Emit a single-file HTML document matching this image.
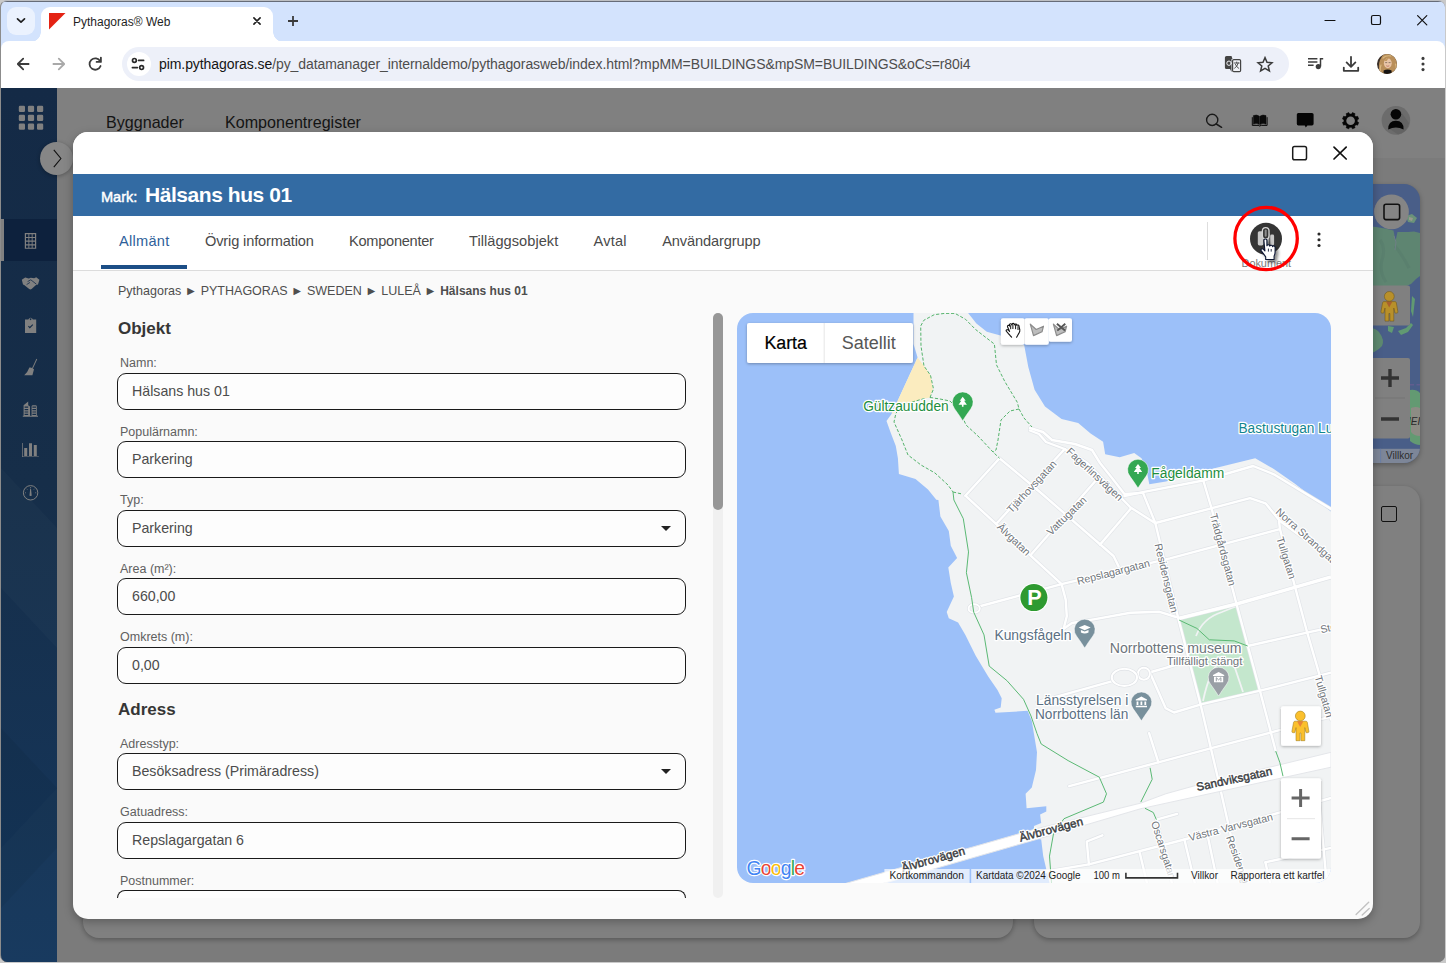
<!DOCTYPE html>
<html lang="sv">
<head>
<meta charset="utf-8">
<title>Pythagoras® Web</title>
<style>
*{box-sizing:border-box;margin:0;padding:0}
html,body{width:1446px;height:963px;overflow:hidden;background:#c9c9c9;font-family:"Liberation Sans",sans-serif;}
.abs{position:absolute}
#win{position:absolute;left:0;top:0;width:1445px;height:962px;border-radius:7px;overflow:hidden;background:#7b7b7b;border-top:1px solid #bdbfc2;border-left:1px solid #8c8c8c;}
/* ---------- browser chrome ---------- */
#tabstrip{position:absolute;left:0;top:0;width:1446px;height:52px;background:#d3e3fd}
#tabdd{position:absolute;left:6px;top:6px;width:28px;height:28px;border-radius:9px;background:#ebf2fe}
#tab{position:absolute;left:40px;top:6px;width:232px;height:36px;background:#fff;border-radius:9px 9px 0 0}
#tab:before,#tab:after{content:"";position:absolute;bottom:1px;width:10px;height:10px;background:radial-gradient(circle at 0 0,rgba(255,255,255,0) 9.5px,#fff 10px)}
#tab:before{left:-10px}
#tab:after{right:-10px;background:radial-gradient(circle at 100% 0,rgba(255,255,255,0) 9.5px,#fff 10px)}
#tabtitle{position:absolute;left:32px;top:8px;font-size:12px;color:#1f1f1f;white-space:nowrap}
#toolbar{position:absolute;left:0;top:40px;width:1444px;height:47px;background:#fff;border-radius:8px 8px 0 0}
#omni{position:absolute;left:120.5px;top:6px;width:1167.5px;height:34px;border-radius:17px;background:#edf0f9}
#omni .site{position:absolute;left:5px;top:5px;width:24px;height:24px;border-radius:12px;background:#fff}
#url{position:absolute;left:37.5px;top:9px;font-size:14px;color:#4d4d4d;white-space:nowrap;letter-spacing:-0.075px}
/* ---------- app ---------- */
#app{position:absolute;left:0;top:87px;width:1446px;height:876px;background:#7b7b7b}
#side{position:absolute;left:0;top:0;width:56px;height:876px;background:linear-gradient(180deg,#142a46 0%,#162e49 45%,#15375d 100%)}
#side .active{position:absolute;left:0;top:131px;width:56px;height:42px;background:#0d213d}
#side .active:before{content:"";position:absolute;left:0;top:0;width:3px;height:42px;background:#808080}
#topnav{position:absolute;left:56px;top:0;width:1390px;height:70px;background:#808080}
#topnav span{position:absolute;top:25px;font-size:16.1px;color:#141414;white-space:nowrap}
.card{position:absolute;background:#808080;border-radius:16px;box-shadow:0 2px 5px rgba(0,0,0,.28)}
#collapse{position:absolute;left:39px;top:53.5px;width:33px;height:33px;border-radius:17px;background:#868686;box-shadow:0 1px 4px rgba(0,0,0,.3)}
/* ---------- modal ---------- */
#modal{position:absolute;left:72px;top:131px;width:1300px;height:787px;border-radius:15px;background:#fafafa;overflow:hidden;box-shadow:0 3px 10px rgba(0,0,0,.28)}
#mtop{position:absolute;left:0;top:0;width:1300px;height:43px;background:#fff}
#mhead{position:absolute;left:0;top:43px;width:1300px;height:42px;background:#336ba3}
#mhead .lbl{position:absolute;left:28px;top:15px;font-size:14.6px;color:#fff;font-weight:normal;-webkit-text-stroke:.45px #fff;letter-spacing:-.05px}
#mhead .ttl{position:absolute;left:72px;top:9px;font-size:21px;color:#fff;font-weight:bold;letter-spacing:-.45px;white-space:nowrap}
#mtabs{position:absolute;left:0;top:85px;width:1300px;height:55px;background:#fff;border-bottom:1px solid #dcdcdc}
#mtabs span{position:absolute;top:17px;font-size:14.6px;color:#4a4a4a;white-space:nowrap}
#mtabs .ul{position:absolute;left:28px;top:49px;width:86px;height:4px;background:#1c4e86}
.crumb{position:absolute;left:45px;top:153px;font-size:12.53px;color:#4e4e4e;white-space:nowrap}
.h{position:absolute;left:45px;font-size:17px;font-weight:bold;color:#363636}
.l{position:absolute;left:47px;font-size:12.5px;color:#606060;white-space:nowrap}
.f{position:absolute;left:44px;width:568.6px;height:37px;border:1px solid #1a1a1a;border-radius:9px;background:#fdfdfd;font-size:14.2px;color:#4c4c4c;padding:9.4px 0 0 14px;white-space:nowrap}
.f.sel:after{content:"";position:absolute;right:14px;top:15px;border-left:5px solid transparent;border-right:5px solid transparent;border-top:5px solid #222}
#sb{position:absolute;left:640px;top:182px;width:10px;height:585px;border-radius:5px;background:#f0f0f0}
#sb i{position:absolute;left:0;top:0;width:10px;height:197px;border-radius:5px;background:#979797}
#map{position:absolute;left:664px;top:182px;width:594px;height:570px;border-radius:16px;overflow:hidden;background:transparent}
</style>
</head>
<body>
<div id="win">
 <div class="abs" style="left:3px;top:0;width:1438px;height:1px;background:#666c78;z-index:50"></div>
 <div id="tabstrip">
  <div id="tabdd"></div>
  <div id="tab"><div id="tabtitle">Pythagoras® Web</div></div>
 </div>
 <div id="toolbar">
  <div id="omni"><div class="site"></div><div id="url"><span style="color:#141414">pim.pythagoras.se</span>/py_datamanager_internaldemo/pythagorasweb/index.html?mpMM=BUILDINGS&amp;mpSM=BUILDINGS&amp;oCs=r80i4</div></div>
 </div>

 <svg id="chromeicons" class="abs" style="left:-1px;top:-1px" width="1446" height="88" viewBox="0 0 1446 88" fill="none" stroke-linecap="round" stroke-linejoin="round">
  <!-- tab dropdown chevron -->
  <path d="M17.5 18.9 L21 22.2 L24.5 18.9" stroke="#1f1f1f" stroke-width="1.7"/>
  <!-- favicon -->
  <path d="M49 13 H65.5 L49 29.5 Z" fill="#e42313"/>
  <!-- tab close -->
  <path d="M253.9 17.9 L260.1 24.1 M260.1 17.9 L253.9 24.1" stroke="#1f1f1f" stroke-width="1.6"/>
  <!-- new tab -->
  <path d="M288 21 H298 M293 16 V26" stroke="#3a3a3a" stroke-width="1.8" stroke-linecap="butt"/>
  <!-- window controls -->
  <path d="M1325 20.5 H1335" stroke="#111" stroke-width="1.2"/>
  <rect x="1371.5" y="15.5" width="9" height="9" rx="1.6" stroke="#111" stroke-width="1.2"/>
  <path d="M1417.6 15.6 L1426.8 24.8 M1426.8 15.6 L1417.6 24.8" stroke="#111" stroke-width="1.2"/>
  <!-- back -->
  <path d="M28.6 64 H18 M23.2 58.6 L17.8 64 L23.2 69.4" stroke="#3c3c3c" stroke-width="1.8"/>
  <!-- forward -->
  <path d="M53.4 64 H64 M58.8 58.6 L64.2 64 L58.8 69.4" stroke="#a9a9a9" stroke-width="1.8"/>
  <!-- reload -->
  <path d="M100.2 61.2 A5.7 5.7 0 1 0 100.6 66" stroke="#3c3c3c" stroke-width="1.8"/>
  <path d="M100.9 57.6 V61.9 H96.6" stroke="#3c3c3c" stroke-width="1.8"/>
  <!-- site settings (tune) icon -->
  <g stroke="#2a2a2a" stroke-width="1.7">
   <circle cx="134.4" cy="60.4" r="1.9"/><path d="M138.6 60.4 H143.6"/>
   <circle cx="141.6" cy="67.6" r="1.9"/><path d="M132.4 67.6 H137.4"/>
  </g>
  <!-- translate icon -->
  <path d="M1226.5 56 h5 l1 3 h-1 v13 l-1.5 -3 h-3.5 a1.6 1.6 0 0 1 -1.6 -1.6 v-9.8 a1.6 1.6 0 0 1 1.6 -1.6z" fill="#444" stroke="none"/>
  <rect x="1232.6" y="59.6" width="8" height="12" rx="1.2" fill="#f2f3f8" stroke="#444" stroke-width="1.2"/>
  <circle cx="1229" cy="63.2" r="2.2" stroke="#f2f3f8" stroke-width="1"/>
  <path d="M1234.2 63 h5 M1236.7 62 v1 M1238.3 63 q-.8 3.2 -3.8 5.4 M1235.4 64.4 q1 2.6 3.4 4" stroke="#444" stroke-width=".9"/>
  <!-- star -->
  <path d="M1265 57.6 L1267 62.2 L1272 62.7 L1268.2 66 L1269.4 70.9 L1265 68.3 L1260.6 70.9 L1261.8 66 L1258 62.7 L1263 62.2 Z" stroke="#3c3c3c" stroke-width="1.5" stroke-linejoin="miter"/>
  <!-- media (queue music) -->
  <path d="M1308 58.7 H1317.4 M1308 62 H1317.4 M1308 65.3 H1313.6" stroke="#3c3c3c" stroke-width="1.5" stroke-linecap="butt"/>
  <path d="M1320.5 66.5 V58.7 H1323.2" stroke="#3c3c3c" stroke-width="1.5" stroke-linecap="butt" stroke-linejoin="miter"/>
  <circle cx="1318.3" cy="66.6" r="2.6" fill="#3c3c3c"/>
  <!-- download -->
  <path d="M1351 56.8 V66.4 M1346.6 62.4 L1351 66.8 L1355.4 62.4" stroke="#3c3c3c" stroke-width="1.8"/>
  <path d="M1343.8 67.6 V70.8 H1358.2 V67.6" stroke="#3c3c3c" stroke-width="1.8"/>
  <!-- avatar -->
  <defs><clipPath id="avc"><circle cx="1387" cy="64" r="10"/></clipPath></defs>
  <g clip-path="url(#avc)">
   <rect x="1376" y="53" width="22" height="22" fill="#3a2f28"/>
   <path d="M1380.5 75 q-3 -8 -.5 -15 q2.5 -7 8 -7 q6 0 8.500000000000001 6 q2 6 0 16z" fill="#b98f5a"/>
   <path d="M1381 74 q-1.500000000000001 -5 0 -9 M1395.5 73 q1.500000000000001 -5 0 -9 M1383 58 q3 -3 8 -2" stroke="#d9b880" stroke-width="1.2" fill="none"/>
   <ellipse cx="1387.8" cy="63.2" rx="3.9" ry="5" fill="#e8c4a6"/>
   <path d="M1384.2 61 q1.500000000000001 -3.500000000000001 5.500000000000001 -3.500000000000001 q-2 1 -3 3.500000000000001z" fill="#c39a62"/>
   <path d="M1385.6 62.6 h1.2 M1389 62.6 h1.2" stroke="#6b5a4a" stroke-width=".7"/>
   <path d="M1386.6 66 q1.2 .8 2.4 0" stroke="#b0604f" stroke-width=".7" fill="none"/>
   <path d="M1383.6 70.5 q4 -2 8 0 v5 h-8z" fill="#161413"/>
  </g>
  <!-- kebab -->
  <g fill="#3c3c3c"><circle cx="1423" cy="58.4" r="1.55"/><circle cx="1423" cy="64" r="1.55"/><circle cx="1423" cy="69.6" r="1.55"/></g>
 </svg>
 <div id="app">
  <div id="topnav"><span style="left:49px">Byggnader</span><span style="left:168px">Komponentregister</span></div>
  <div class="card" style="left:82px;top:90px;width:930px;height:760px"></div>
  <div class="card" id="rcard1" style="left:1033px;top:96px;width:386px;height:279px;overflow:hidden;background:#495e88">
   <svg class="abs" style="left:-1034px;top:-184px" width="1446" height="500" viewBox="0 0 1446 500">
    <!-- land -->
    <path d="M1366 226 L1376 227 L1385 228.5 L1393.5 230.5 L1395.5 241 L1397.5 232 L1408 232 L1414 231.5 L1420 233 V276 L1416 279 L1411 284 L1404 287 H1366 Z" fill="#5e8571"/>
    <path d="M1380 240 q6 8 2 20 q-3 12 4 22 M1395 246 q8 10 14 22" fill="none" stroke="#56796a" stroke-width="3" opacity=".45"/>
    <path d="M1394 236 l2 6 l-1 8" stroke="#6e7f86" stroke-width="1" fill="none"/>
    <path d="M1406 216 l6 -2 l5 4 l-3 5 l-6 -1z" fill="#6b9379"/>
    <path d="M1409 217 l4 1 l-1 3 l-3 -1z" fill="#9a9a8e"/>
    <path d="M1366 328 q8 -1 13 4 q6 8 3 14 q-6 7 -16 8z" fill="#5e8a70"/>
    <path d="M1388 326 l6 1 l-2 6 l-4 -2z M1398 331 l8 -3 l5 -5 l2 2 l-5 7 l-7 3z M1412 296 l3 3 l-2 18 l-2 -6z" fill="#619a72"/>
    <path d="M1410 390 q6 -1 10 3 v52 q-5 0 -10 -4z" fill="#639a72"/>
    <path d="M1411 408 q5 -2 9 0 v28 q-6 0 -9 -4z" fill="#8d8c84"/>
    <path d="M1410 384.800000000000001 H1420" stroke="#6e5d93" stroke-width="1" stroke-dasharray="4 2.500000000000001"/>
    <text x="1408" y="425" font-size="10" font-style="italic" fill="#2a2a2a" font-family="Liberation Sans, sans-serif">IEI</text>
    <!-- circle w/ square -->
    <circle cx="1391.5" cy="211.8" r="17.4" fill="#858585"/>
    <rect x="1384" y="204.2" width="15.6" height="15.4" rx="2" fill="none" stroke="#111" stroke-width="1.6"/>
    <!-- pegman -->
    <rect x="1360" y="285.6" width="50" height="40" rx="2" fill="#808080"/>
    <g transform="translate(89 -419.6)"><path d="M1295 721.2 L1305.9 721.2 q1 0 1.400000000000001 1 L1308.9 731.4 q.2 1 -.8 1.200000000000001 l-1.400000000000001 .2 q-.6 0 -.8 -.6 L1304.8 727.6 V740.7 h-3.9 v-7.600000000000001 h-1 v7.600000000000001 h-3.9 V727.6 L1294.9 732.2 q-.2 .6 -.8 .6 l-1.400000000000001 -.2 q-1 -.2 -.8 -1.200000000000001 L1293.6 722.2 q.4 -1 1.400000000000001 -1z" fill="#b8902a" stroke="#6e561a" stroke-width=".55" stroke-linejoin="round"/><path d="M1297 721.2 h6.4 l-3.2 5.800000000000001z" fill="#a9602d"/><circle cx="1300.3" cy="716" r="4.9" fill="#b8902a" stroke="#6e561a" stroke-width=".55"/></g>
    <!-- zoom -->
    <rect x="1360" y="358" width="50" height="80.4" rx="2" fill="#808080"/>
    <path d="M1375 398 H1405" stroke="#757575" stroke-width="1"/>
    <path d="M1381 378 h18 M1390 369 v18 M1381 419 h18" stroke="#333" stroke-width="3.4"/>
    <!-- footer -->
    <rect x="1360" y="448.800000000000001" width="70" height="14.5" fill="#7d8698"/>
    <path d="M1380.600000000000001 448.800000000000001 v14" stroke="#6c7fa6" stroke-width="1"/>
    <text x="1386" y="459.2" font-size="10" fill="#2c2c2c" font-family="Liberation Sans, sans-serif">Villkor</text>
   </svg>
  </div>
  <div class="card" style="left:1033px;top:398px;width:386px;height:452px"><div class="abs" style="left:346.5px;top:19.5px;width:16.5px;height:16.5px;border:1.6px solid #111;border-radius:2px"></div></div>
  <div id="side"><svg class="abs" style="left:0;top:0" width="56" height="876" viewBox="0 0 56 876"><path d="M0 380 L56 440 L56 560 L0 500Z" fill="#fff" opacity=".018"/><path d="M0 640 L56 700 L56 760 L0 820Z" fill="#000" opacity=".05"/><path d="M0 760 L56 700 L56 876 L0 876Z" fill="#fff" opacity=".015"/></svg><div class="active"></div><svg class="abs" style="left:-1px;top:-88px" width="58" height="963" viewBox="0 0 58 963">
   <g fill="#808080">
    <g id="gridic">
     <rect x="18.8" y="105.8" width="6.2" height="6.2" rx="1.2"/><rect x="27.9" y="105.8" width="6.2" height="6.2" rx="1.2"/><rect x="37" y="105.8" width="6.2" height="6.2" rx="1.2"/>
     <rect x="18.8" y="114.7" width="6.2" height="6.2" rx="1.2"/><rect x="27.9" y="114.7" width="6.2" height="6.2" rx="1.2"/><rect x="37" y="114.7" width="6.2" height="6.2" rx="1.2"/>
     <rect x="18.8" y="123.6" width="6.2" height="6.2" rx="1.2"/><rect x="27.9" y="123.6" width="6.2" height="6.2" rx="1.2"/><rect x="37" y="123.6" width="6.2" height="6.2" rx="1.2"/>
    </g>
    <!-- building grid icon -->
    <path fill-rule="evenodd" d="M24.8 233 h11.4 v15.8 h-11.4z M26 234.3 v2.6 h2.4 v-2.6z M29.3 234.3 v2.6 h2.4 v-2.6z M32.6 234.3 v2.6 h2.4 v-2.6z M26 238 v2.6 h2.4 v-2.6z M29.3 238 v2.6 h2.4 v-2.6z M32.6 238 v2.6 h2.4 v-2.6z M26 241.7 v2.6 h2.4 v-2.6z M29.3 241.7 v2.6 h2.4 v-2.6z M32.6 241.7 v2.6 h2.4 v-2.6z M26 245.4 v2.4 h2.4 v-2.4z M29.3 245.4 v2.4 h2.4 v-2.4z M32.6 245.4 v2.4 h2.4 v-2.4z"/>
    <!-- handshake -->
    <path d="M21.8 279.8 l3.4 -2.2 l3.6 1 l2 -.9 l3.4 .6 l2 -1 l3.2 2.4 l-1.4 4.8 l-2 .6 l-4.4 4 q-1.2 .8 -2.4 0 l-5 -4.2 l-1.2 -.4z"/>
    <path d="M27.6 281.6 l3.2 -1.8 l5.6 4.4 M26.6 284.6 l3.4 -2.2" fill="none" stroke="#152c4a" stroke-width=".8"/>
    <!-- clipboard -->
    <path fill-rule="evenodd" d="M25 319.4 h3.4 a2.3 2.3 0 0 1 4.4 0 h3.4 v13.6 h-11.2z M30.6 318.2 a.9 .9 0 1 0 .01 0z M28 326.6 l1.8 1.8 l3.4 -3.4 l-.8 -.8 l-2.6 2.6 l-1 -1z"/>
    <!-- broom -->
    <path d="M36.4 358.8 l.8 .4 l-4.4 9.6 l-.9 -.4z"/>
    <path d="M29.4 367.6 q2.4 -.4 4.6 1.6 l-1.6 6 h-8.2 q3.4 -2.6 5.2 -7.6z"/>
    <!-- city buildings -->
    <path fill-rule="evenodd" d="M22.8 416.8 v-1 h.8 v-10.6 l4.6 -3.6 v3.6 l1.8 1.2 v9.4 h1.6 v-9.2 q0 -1.4 1.4 -1.4 h2.4 q1.4 0 1.4 1.4 v9.200000000000001 h1.2 v1z M24.6 406.6 v1.2 h3.6 v-1.2z M24.6 409 v1.2 h3.6 v-1.2z M24.6 411.4 v1.2 h3.6 v-1.2z M24.6 413.8 v1.2 h3.6 v-1.2z M32.4 406.6 v1.2 h3.6 v-1.2z M32.4 409 v1.2 h3.6 v-1.2z M32.4 411.4 v1.2 h3.6 v-1.2z M32.4 413.8 v1.2 h3.6 v-1.2z"/>
    <!-- bar chart -->
    <path d="M22 443 h.7 v13.4 h16.2 v.7 h-16.9z M24.2 448 h3 v8 h-3z M29 443.2 h3 v12.8 h-3z M33.8 445 h3 v11 h-3z"/>
   </g>
   <!-- gauge -->
   <g fill="none" stroke="#808080">
    <circle cx="30.6" cy="492.8" r="7.2" stroke-width="1"/>
    <path d="M30.6 487 v1.2 M25 492.8 h1 M35.2 492.8 h1 M26.6 488.8 l.7 .7 M34.6 488.8 l-.7 .7" stroke-width=".8"/>
   </g>
   <path d="M30.2 488.8 h.8 l.6 5.6 a1.1 1.1 0 1 1 -2 0z" fill="#808080"/>
  </svg></div>

  <svg class="abs" style="left:-1px;top:-88px;pointer-events:none" width="1446" height="200" viewBox="0 0 1446 200">
   <circle cx="1212.2" cy="119.9" r="5.6" fill="none" stroke="#1a1a1a" stroke-width="1.4"/>
   <path d="M1216.3 124 L1221.6 127.3" stroke="#1a1a1a" stroke-width="1.5" stroke-linecap="round"/>
   <!-- book -->
   <path d="M1253.4 115.6 q3.200000000000001 -1.400000000000001 6.000000000000001 .6 v8.4 q-2.800000000000001 -1.800000000000001 -6.000000000000001 -.4z M1266 115.6 q-3.200000000000001 -1.400000000000001 -6.000000000000001 .6 v8.4 q2.800000000000001 -1.800000000000001 6.000000000000001 -.4z" fill="#0a0a0a" stroke="#0a0a0a" stroke-width=".5"/>
   <path d="M1252.3 117.2 v8.2 h5.8 q1.600000000000001 0 1.600000000000001 .9 q0 -.9 1.600000000000001 -.9 h5.8 v-8.2" fill="none" stroke="#0a0a0a" stroke-width="1"/>
   <!-- chat -->
   <path d="M1298.4 113 h13.6 q1.6 0 1.6 1.6 v9.2 q0 1.6 -1.6 1.6 h-4.6 l-1.6 2 l-1 -2 h-6.4 q-1.6 0 -1.6 -1.6 v-9.2 q0 -1.6 1.6 -1.6z" fill="#050505"/>
   <!-- gear -->
   <path d="M1358.70 122.51 L1357.61 125.15 L1356.02 124.64 L1354.54 126.12 L1355.05 127.71 L1352.41 128.80 L1351.65 127.32 L1349.55 127.32 L1348.79 128.80 L1346.15 127.71 L1346.66 126.12 L1345.18 124.64 L1343.59 125.15 L1342.50 122.51 L1343.98 121.75 L1343.98 119.65 L1342.50 118.89 L1343.59 116.25 L1345.18 116.76 L1346.66 115.28 L1346.15 113.69 L1348.79 112.60 L1349.55 114.08 L1351.65 114.08 L1352.41 112.60 L1355.05 113.69 L1354.54 115.28 L1356.02 116.76 L1357.61 116.25 L1358.70 118.89 L1357.22 119.65 L1357.22 121.75Z" fill="#050505" stroke="#050505" stroke-width=".6" stroke-linejoin="round"/>
   <circle cx="1350.6" cy="120.7" r="4.3" fill="#808080"/>
   <!-- user -->
   <circle cx="1395.9" cy="120.4" r="14.3" fill="#6c6c6c"/>
   <path d="M1400 110.5 L1409 123 A14.3 14.3 0 0 1 1398 134.4 L1389 128.5z" fill="#636363"/>
   <circle cx="1395.9" cy="114.2" r="5.3" fill="#050505"/>
   <path d="M1388.2 129.6 q-.2 -8.800000000000001 7.7 -8.800000000000001 q7.9 0 7.7 8.800000000000001 q-7.7 -4.4 -15.4 0z" fill="#050505"/>
  </svg>
  <div id="collapse"><svg width="33" height="33" viewBox="0 0 33 33" class="abs" style="left:0;top:0"><path d="M13.8 7.8 L20.9 16.5 L13.8 25.2" fill="none" stroke="#111" stroke-width="1.1"/></svg></div>
 </div>
 <div id="modal"><div id="mi" class="abs" style="left:0;top:-1px;width:1300px;height:788px">
  <div id="mtop"></div>
  <div id="mhead"><span class="lbl">Mark:</span><span class="ttl">Hälsans hus 01</span></div>
  <div id="mtabs">
   <span style="left:46px;color:#2f5f9a;letter-spacing:.27px">Allmänt</span>
   <span style="left:132px;letter-spacing:-.14px">Övrig information</span>
   <span style="left:276px;letter-spacing:-.27px">Komponenter</span>
   <span style="left:396px;letter-spacing:.04px">Tilläggsobjekt</span>
   <span style="left:520.6px;letter-spacing:.2px">Avtal</span>
   <span style="left:589.2px;letter-spacing:-.12px">Användargrupp</span>
   <div class="ul"></div>
  </div>
  <div class="crumb">Pythagoras ► PYTHAGORAS ► SWEDEN ► LULEÅ ► <b style="font-size:12px">Hälsans hus 01</b></div>
  <div class="h" style="top:188px">Objekt</div>
  <div class="l" style="top:225px">Namn:</div>
  <div class="f" style="top:242px">Hälsans hus 01</div>
  <div class="l" style="top:294px">Populärnamn:</div>
  <div class="f" style="top:310px">Parkering</div>
  <div class="l" style="top:362px">Typ:</div>
  <div class="f sel" style="top:379px">Parkering</div>
  <div class="l" style="top:431px">Area (m²):</div>
  <div class="f" style="top:447px">660,00</div>
  <div class="l" style="top:499px">Omkrets (m):</div>
  <div class="f" style="top:516px">0,00</div>
  <div class="h" style="top:569px">Adress</div>
  <div class="l" style="top:606px">Adresstyp:</div>
  <div class="f sel" style="top:622px">Besöksadress (Primäradress)</div>
  <div class="l" style="top:674px">Gatuadress:</div>
  <div class="f" style="top:691px">Repslagargatan 6</div>
  <div class="l" style="top:743px">Postnummer:</div>
  <div class="f" style="top:759px;height:7.5px;border-bottom:none;border-radius:9px 9px 0 0;padding:0"></div>

  <svg class="abs" style="left:-73px;top:-131px;pointer-events:none" width="1446" height="930" viewBox="0 0 1446 930">
   <rect x="1292.7" y="146.4" width="13.8" height="13.4" rx="1.8" fill="none" stroke="#1a1a1a" stroke-width="1.5"/>
   <path d="M1334 147.2 L1346.2 159 M1346.2 147.2 L1334 159" stroke="#111" stroke-width="1.7" stroke-linecap="round"/>
   <path d="M1207.5 222 V260" stroke="#dedede" stroke-width="1"/>
   <g fill="#2a2a2a"><circle cx="1319" cy="234" r="1.55"/><circle cx="1319" cy="239.7" r="1.55"/><circle cx="1319" cy="245.5" r="1.55"/></g>
   <!-- Dokument button -->
   <circle cx="1266" cy="238.8" r="16" fill="#353535"/>
   <rect x="1257.8" y="231.2" width="5.6" height="14.2" rx="1.6" fill="#c9c9c9"/>
   <rect x="1264.2" y="233" width="5.2" height="12.4" rx="1" fill="#a9a9a9"/>
   <rect x="1270.2" y="234.6" width="3.9" height="10.8" rx="1.4" fill="#c9c9c9"/>
   <rect x="1262.4" y="227.6" width="6.6" height="11.4" rx="3.2" fill="#353535" stroke="#d4d4d4" stroke-width="1.3"/>
   <rect x="1264.7" y="229.6" width="2" height="7.2" rx="1" fill="#8c8c8c"/>
   <text x="1266.3" y="266.9" text-anchor="middle" font-size="11" fill="#7a7a7a" font-family="Liberation Sans, sans-serif" textLength="49.5" lengthAdjust="spacingAndGlyphs">Dokument</text>
   <circle cx="1266.1" cy="238.5" r="31.2" fill="none" stroke="#ff0000" stroke-width="3.3"/>
   <!-- cursor -->
   <defs><filter id="cush" x="-50%" y="-50%" width="200%" height="200%"><feDropShadow dx="2.5" dy="2.5" stdDeviation="1.6" flood-color="#000" flood-opacity=".45"/></filter></defs>
   <path filter="url(#cush)" d="M1263.9 240.6 q0 -1.6 1.500000000000001 -1.6 q1.500000000000001 0 1.500000000000001 1.6 v5.2 q.2 -1.2 1.500000000000001 -1.1 q1.300000000000001 .1 1.400000000000001 1.400000000000001 q.3 -1.000000000000001 1.500000000000001 -.9 q1.200000000000001 .1 1.300000000000001 1.400000000000001 q.3 -.8 1.400000000000001 -.6 q1.100000000000001 .2 1.100000000000001 1.500000000000001 v4.4 q0 2.2 -1 4 v3.6 h-8.4 v-2.6 q-1.800000000000001 -2.600000000000001 -4.400000000000001 -6.000000000000001 q-.8 -1.200000000000001 .2 -1.900000000000001 q1 -.6 2 .4 l1.400000000000001 1.500000000000001z" fill="#fff" stroke="#0d1633" stroke-width="1.1" stroke-linejoin="round"/>
   <path d="M1268.4 248.6 v3 M1271.2 249 v2.600000000000001" stroke="#0d1633" stroke-width=".9"/>
   <!-- resize grip -->
   <path d="M1356.1 914.4 L1368.7 902.3 M1362.2 915 L1369.2 908.4" stroke="#c2c2c2" stroke-width="1.4" stroke-linecap="round"/>
  </svg>
  <div id="sb"><i></i></div>
  <div id="map"><!--MAP--><svg class="abs" style="left:0;top:0" width="594" height="570" viewBox="737 313 594 570" font-family="Liberation Sans, sans-serif">
<rect x="737" y="313" width="594" height="570" fill="#9cc0f9"/>
<path d="M913.5 313.0 L913.5 344.0 L917.6 357.6 L891.7 413.7 L886.5 421.0 L890.6 432.4 L895.8 445.9 L897.9 458.3 L898.9 473.9 L915.5 479.1 L928.0 489.5 L936.3 499.8 L938.4 500.0 L940.4 516.6 L948.8 531.1 L950.8 545.7 L957.1 558.1 L948.3 567.5 L950.8 583.0 L953.9 596.5 L946.7 612.1 L948.8 618.3 L958.1 622.5 L965.4 634.9 L975.7 655.7 L988.2 676.5 L997.5 690.0 L1001.7 698.3 L1000.7 707.6 L994.4 709.7 L995.5 712.8 L1027.6 710.8 L1031.8 721.1 L1037.0 752.3 L1036.0 770.0 L1031.8 787.6 L1025.6 793.8 L1026.6 808.3 L1046.3 806.3 L1046.3 811.4 L1040.1 814.6 L1041.2 822.9 L1034.0 826.0 L1034.0 838.0 L1041.2 839.5 L1043.2 856.1 L1049.5 883.0 L1331.0 883.0 L1331.0 511.6 L1294.6 483.6 L1273.8 469.0 L1255.2 458.3 L1203.3 471.1 L1165.9 481.5 L1149.3 484.3 L1146.7 470.8 L1141.5 458.3 L1134.2 453.1 L1119.7 457.3 L1105.2 454.2 L1103.1 441.7 L1090.6 433.4 L1078.2 423.0 L1061.6 418.9 L1045.0 406.4 L1034.6 389.8 L1028.3 367.0 L1024.2 345.2 L1001.4 335.8 L986.8 331.7 L976.4 323.4 L968.1 313.0Z" fill="#f1f3f4"/>
<path d="M917.6 357.6 L924.0 366.0 L930.5 375.3 L932.8 389.0 L929.8 397.5 L924.5 398.5 L905.0 404.0 L894.5 412.9 L891.7 413.7Z" fill="#fbecbf"/>
<path d="M1179.2 619.3 L1237.3 605.8 L1258.1 689.6 L1202.0 704.2Z" fill="#c4e7cd"/>
<path d="M1203 701 Q1210 668 1222 660 M1196 636 Q1203 618 1222 612 L1237 606 M1234 665 L1243 692" fill="none" stroke="#f1f3f4" stroke-width="1.8"/>
<path d="M965.4 495.7 L999.6 458.3 L1037.0 489.5" fill="none" stroke="#e1e4e8" stroke-width="3.7" stroke-linecap="round" stroke-linejoin="round"/>
<path d="M965.4 495.7 L1061.6 584.1 L1065.7 599.6 L1066.8 616.3 L1063.6 628.7" fill="none" stroke="#e1e4e8" stroke-width="3.7" stroke-linecap="round" stroke-linejoin="round"/>
<path d="M997.2 522.8 L1064.7 449.0" fill="none" stroke="#e1e4e8" stroke-width="3.7" stroke-linecap="round" stroke-linejoin="round"/>
<path d="M1031.5 554.0 L1098.0 478.0" fill="none" stroke="#e1e4e8" stroke-width="3.7" stroke-linecap="round" stroke-linejoin="round"/>
<path d="M1100.0 544.6 L1131.1 508.3" fill="none" stroke="#e1e4e8" stroke-width="3.7" stroke-linecap="round" stroke-linejoin="round"/>
<path d="M1037.0 489.5 L1113.5 556.0 L1118.6 566.4" fill="none" stroke="#e1e4e8" stroke-width="3.7" stroke-linecap="round" stroke-linejoin="round"/>
<path d="M1030.0 430.5 L1039.0 434.0 L1046.0 442.0 L1064.7 449.0 L1087.0 462.8 L1130.6 507.5 L1155.0 523.0" fill="none" stroke="#e1e4e8" stroke-width="3.7" stroke-linecap="round" stroke-linejoin="round"/>
<path d="M1030.0 428.0 L1043.0 432.0 L1052.0 440.0 L1075.0 444.0 L1092.0 450.0 L1100.0 463.0 L1112.0 478.0 L1124.4 494.0 L1143.0 492.9" fill="none" stroke="#e1e4e8" stroke-width="3.7" stroke-linecap="round" stroke-linejoin="round"/>
<path d="M973.3 608.0 L1061.6 584.1 L1170.0 558.3 L1279.0 529.3" fill="none" stroke="#e1e4e8" stroke-width="3.7" stroke-linecap="round" stroke-linejoin="round"/>
<path d="M1143.0 492.9 L1155.3 523.0 L1178.3 618.5 L1201.0 706.3 L1217.6 776.8 L1241.5 883.0" fill="none" stroke="#e1e4e8" stroke-width="3.7" stroke-linecap="round" stroke-linejoin="round"/>
<path d="M1124.4 496.0 L1144.1 491.9 L1203.3 480.5 L1253.1 466.0 L1273.8 474.3 L1331.0 509.0" fill="none" stroke="#e1e4e8" stroke-width="3.7" stroke-linecap="round" stroke-linejoin="round"/>
<path d="M1155.5 523.0 L1250.0 498.1 L1265.5 503.3 L1280.0 521.0 L1331.0 558.3" fill="none" stroke="#e1e4e8" stroke-width="3.7" stroke-linecap="round" stroke-linejoin="round"/>
<path d="M1203.3 480.5 L1211.6 508.5 L1236.5 604.0 L1260.2 691.7 L1275.7 751.0" fill="none" stroke="#e1e4e8" stroke-width="3.7" stroke-linecap="round" stroke-linejoin="round"/>
<path d="M1279.0 521.0 L1280.0 529.3 L1294.6 585.3 L1306.9 631.5 L1321.4 681.3 L1331.0 719.5" fill="none" stroke="#e1e4e8" stroke-width="3.7" stroke-linecap="round" stroke-linejoin="round"/>
<path d="M1247.7 646.0 L1306.9 632.6 L1331.0 627.4" fill="none" stroke="#e1e4e8" stroke-width="3.7" stroke-linecap="round" stroke-linejoin="round"/>
<path d="M1150.1 673.0 L1165.7 708.3 L1174.0 712.5 L1202.0 704.2 L1260.2 690.7 L1321.4 675.1 L1331.0 672.6" fill="none" stroke="#e1e4e8" stroke-width="3.7" stroke-linecap="round" stroke-linejoin="round"/>
<path d="M1151.2 672.0 L1190.6 660.6" fill="none" stroke="#e1e4e8" stroke-width="3.7" stroke-linecap="round" stroke-linejoin="round"/>
<path d="M1037.0 702.1 L1111.7 681.3" fill="none" stroke="#e1e4e8" stroke-width="3.7" stroke-linecap="round" stroke-linejoin="round"/>
<path d="M1063.6 628.7 L1072.0 623.0 L1095.1 619.1 L1130.4 612.8 L1159.5 611.8 L1176.1 617.0" fill="none" stroke="#e1e4e8" stroke-width="3.7" stroke-linecap="round" stroke-linejoin="round"/>
<path d="M1069.2 786.2 L1158.4 762.3 L1212.4 747.8 L1275.7 731.2 L1331.0 716.6" fill="none" stroke="#e1e4e8" stroke-width="3.7" stroke-linecap="round" stroke-linejoin="round"/>
<path d="M1149.1 733.2 L1158.4 762.3" fill="none" stroke="#e1e4e8" stroke-width="3.7" stroke-linecap="round" stroke-linejoin="round"/>
<path d="M1102.4 835.3 L1086.8 841.5 L1088.9 864.4 L1184.4 839.5 L1331.0 798.0" fill="none" stroke="#e1e4e8" stroke-width="3.7" stroke-linecap="round" stroke-linejoin="round"/>
<path d="M1156.4 819.7 L1177.1 813.9" fill="none" stroke="#e1e4e8" stroke-width="3.7" stroke-linecap="round" stroke-linejoin="round"/>
<path d="M1156.4 819.7 L1171.9 883.0" fill="none" stroke="#e1e4e8" stroke-width="3.7" stroke-linecap="round" stroke-linejoin="round"/>
<path d="M1139.8 853.0 L1147.0 883.0" fill="none" stroke="#e1e4e8" stroke-width="3.7" stroke-linecap="round" stroke-linejoin="round"/>
<path d="M1184.4 839.5 L1194.8 883.0" fill="none" stroke="#e1e4e8" stroke-width="3.7" stroke-linecap="round" stroke-linejoin="round"/>
<path d="M1207.2 833.5 L1217.6 883.0" fill="none" stroke="#e1e4e8" stroke-width="3.7" stroke-linecap="round" stroke-linejoin="round"/>
<path d="M1265.4 862.3 L1331.0 847.8" fill="none" stroke="#e1e4e8" stroke-width="3.7" stroke-linecap="round" stroke-linejoin="round"/>
<path d="M1319.3 802.1 L1325.6 870.6 L1328.0 883.0" fill="none" stroke="#e1e4e8" stroke-width="3.7" stroke-linecap="round" stroke-linejoin="round"/>
<path d="M1265.4 862.3 L1270.0 883.0" fill="none" stroke="#e1e4e8" stroke-width="3.7" stroke-linecap="round" stroke-linejoin="round"/>
<path d="M1037.0 873.0 L1088.9 864.4" fill="none" stroke="#e1e4e8" stroke-width="3.7" stroke-linecap="round" stroke-linejoin="round"/>
<path d="M1178.3 618.5 L1236.5 604 L1294.6 587.4 L1331 577" fill="none" stroke="#dfe2e6" stroke-width="4.6"/>
<path d="M965.4 495.7 L999.6 458.3 L1037.0 489.5" fill="none" stroke="#fff" stroke-width="2.4" stroke-linecap="round" stroke-linejoin="round"/>
<path d="M965.4 495.7 L1061.6 584.1 L1065.7 599.6 L1066.8 616.3 L1063.6 628.7" fill="none" stroke="#fff" stroke-width="2.4" stroke-linecap="round" stroke-linejoin="round"/>
<path d="M997.2 522.8 L1064.7 449.0" fill="none" stroke="#fff" stroke-width="2.4" stroke-linecap="round" stroke-linejoin="round"/>
<path d="M1031.5 554.0 L1098.0 478.0" fill="none" stroke="#fff" stroke-width="2.4" stroke-linecap="round" stroke-linejoin="round"/>
<path d="M1100.0 544.6 L1131.1 508.3" fill="none" stroke="#fff" stroke-width="2.4" stroke-linecap="round" stroke-linejoin="round"/>
<path d="M1037.0 489.5 L1113.5 556.0 L1118.6 566.4" fill="none" stroke="#fff" stroke-width="2.4" stroke-linecap="round" stroke-linejoin="round"/>
<path d="M1030.0 430.5 L1039.0 434.0 L1046.0 442.0 L1064.7 449.0 L1087.0 462.8 L1130.6 507.5 L1155.0 523.0" fill="none" stroke="#fff" stroke-width="2.4" stroke-linecap="round" stroke-linejoin="round"/>
<path d="M1030.0 428.0 L1043.0 432.0 L1052.0 440.0 L1075.0 444.0 L1092.0 450.0 L1100.0 463.0 L1112.0 478.0 L1124.4 494.0 L1143.0 492.9" fill="none" stroke="#fff" stroke-width="2.4" stroke-linecap="round" stroke-linejoin="round"/>
<path d="M973.3 608.0 L1061.6 584.1 L1170.0 558.3 L1279.0 529.3" fill="none" stroke="#fff" stroke-width="2.4" stroke-linecap="round" stroke-linejoin="round"/>
<path d="M1143.0 492.9 L1155.3 523.0 L1178.3 618.5 L1201.0 706.3 L1217.6 776.8 L1241.5 883.0" fill="none" stroke="#fff" stroke-width="2.4" stroke-linecap="round" stroke-linejoin="round"/>
<path d="M1124.4 496.0 L1144.1 491.9 L1203.3 480.5 L1253.1 466.0 L1273.8 474.3 L1331.0 509.0" fill="none" stroke="#fff" stroke-width="2.4" stroke-linecap="round" stroke-linejoin="round"/>
<path d="M1155.5 523.0 L1250.0 498.1 L1265.5 503.3 L1280.0 521.0 L1331.0 558.3" fill="none" stroke="#fff" stroke-width="2.4" stroke-linecap="round" stroke-linejoin="round"/>
<path d="M1203.3 480.5 L1211.6 508.5 L1236.5 604.0 L1260.2 691.7 L1275.7 751.0" fill="none" stroke="#fff" stroke-width="2.4" stroke-linecap="round" stroke-linejoin="round"/>
<path d="M1279.0 521.0 L1280.0 529.3 L1294.6 585.3 L1306.9 631.5 L1321.4 681.3 L1331.0 719.5" fill="none" stroke="#fff" stroke-width="2.4" stroke-linecap="round" stroke-linejoin="round"/>
<path d="M1247.7 646.0 L1306.9 632.6 L1331.0 627.4" fill="none" stroke="#fff" stroke-width="2.4" stroke-linecap="round" stroke-linejoin="round"/>
<path d="M1150.1 673.0 L1165.7 708.3 L1174.0 712.5 L1202.0 704.2 L1260.2 690.7 L1321.4 675.1 L1331.0 672.6" fill="none" stroke="#fff" stroke-width="2.4" stroke-linecap="round" stroke-linejoin="round"/>
<path d="M1151.2 672.0 L1190.6 660.6" fill="none" stroke="#fff" stroke-width="2.4" stroke-linecap="round" stroke-linejoin="round"/>
<path d="M1037.0 702.1 L1111.7 681.3" fill="none" stroke="#fff" stroke-width="2.4" stroke-linecap="round" stroke-linejoin="round"/>
<path d="M1063.6 628.7 L1072.0 623.0 L1095.1 619.1 L1130.4 612.8 L1159.5 611.8 L1176.1 617.0" fill="none" stroke="#fff" stroke-width="2.4" stroke-linecap="round" stroke-linejoin="round"/>
<path d="M1069.2 786.2 L1158.4 762.3 L1212.4 747.8 L1275.7 731.2 L1331.0 716.6" fill="none" stroke="#fff" stroke-width="2.4" stroke-linecap="round" stroke-linejoin="round"/>
<path d="M1149.1 733.2 L1158.4 762.3" fill="none" stroke="#fff" stroke-width="2.4" stroke-linecap="round" stroke-linejoin="round"/>
<path d="M1102.4 835.3 L1086.8 841.5 L1088.9 864.4 L1184.4 839.5 L1331.0 798.0" fill="none" stroke="#fff" stroke-width="2.4" stroke-linecap="round" stroke-linejoin="round"/>
<path d="M1156.4 819.7 L1177.1 813.9" fill="none" stroke="#fff" stroke-width="2.4" stroke-linecap="round" stroke-linejoin="round"/>
<path d="M1156.4 819.7 L1171.9 883.0" fill="none" stroke="#fff" stroke-width="2.4" stroke-linecap="round" stroke-linejoin="round"/>
<path d="M1139.8 853.0 L1147.0 883.0" fill="none" stroke="#fff" stroke-width="2.4" stroke-linecap="round" stroke-linejoin="round"/>
<path d="M1184.4 839.5 L1194.8 883.0" fill="none" stroke="#fff" stroke-width="2.4" stroke-linecap="round" stroke-linejoin="round"/>
<path d="M1207.2 833.5 L1217.6 883.0" fill="none" stroke="#fff" stroke-width="2.4" stroke-linecap="round" stroke-linejoin="round"/>
<path d="M1265.4 862.3 L1331.0 847.8" fill="none" stroke="#fff" stroke-width="2.4" stroke-linecap="round" stroke-linejoin="round"/>
<path d="M1319.3 802.1 L1325.6 870.6 L1328.0 883.0" fill="none" stroke="#fff" stroke-width="2.4" stroke-linecap="round" stroke-linejoin="round"/>
<path d="M1265.4 862.3 L1270.0 883.0" fill="none" stroke="#fff" stroke-width="2.4" stroke-linecap="round" stroke-linejoin="round"/>
<path d="M1037.0 873.0 L1088.9 864.4" fill="none" stroke="#fff" stroke-width="2.4" stroke-linecap="round" stroke-linejoin="round"/>
<path d="M1178.3 618.5 L1236.5 604 L1294.6 587.4 L1331 577" fill="none" stroke="#fff" stroke-width="3.4"/>
<ellipse cx="974.2" cy="608.4" rx="5.6" ry="4.2" fill="#f1f3f4" stroke="#dfe2e6" stroke-width="3.2"/><ellipse cx="974.2" cy="608.4" rx="5.6" ry="4.2" fill="none" stroke="#fff" stroke-width="2"/>
<circle cx="1143.9" cy="673.7" r="6" fill="#f1f3f4" stroke="#dfe2e6" stroke-width="3.2"/><circle cx="1143.9" cy="673.7" r="6" fill="none" stroke="#fff" stroke-width="2"/>
<ellipse cx="1124.4" cy="677.4" rx="12.6" ry="8.6" fill="#f1f3f4" stroke="#dfe2e6" stroke-width="3.2"/><ellipse cx="1124.4" cy="677.4" rx="12.6" ry="8.6" fill="none" stroke="#fff" stroke-width="2"/>
<path d="M800.0 896.5 L1037.0 828.6 L1140.8 803.1 L1165.7 793.8 L1203.1 783.4 L1331.0 752.3 L1331.0 767.2 L1140.8 808.7 L1037.0 839.3 L810.0 904.5Z" fill="#fff" stroke="#e4e6ea" stroke-width="1"/>
<path d="M930.0 397.5 L933.5 389.0 L930.5 375.3 L924.0 366.0 L921.0 346.0 L920.7 326.0 L923.8 320.3 L934.2 314.7 L944.6 313.4 L955.0 313.4 L965.4 319.2 L975.7 329.6 L994.4 344.1 L996.5 364.9 L1004.8 381.5 L1017.3 402.3 L1019.0 409.0" fill="none" stroke="#55b36c" stroke-width="1" stroke-dasharray="3.2 1.8"/>
<path d="M1019.0 409.0 L1024.0 418.0 L1032.0 427.0" fill="none" stroke="#55b36c" stroke-width="1" stroke-dasharray="3.2 1.8"/>
<path d="M1019.0 409.0 L1010.0 411.0 L1001.0 420.0 L998.0 440.0 L996.0 450.0 L993.0 452.0" fill="none" stroke="#55b36c" stroke-width="1" stroke-dasharray="3.2 1.8"/>
<path d="M930.0 397.5 L940.0 399.0 L950.0 401.0 L960.0 411.0 L966.0 425.0 L978.0 436.0 L993.0 452.0 L999.6 458.3" fill="none" stroke="#55b36c" stroke-width="1" stroke-dasharray="3.2 1.8"/>
<path d="M924.5 398.5 L905.0 404.0 L896.0 413.0 L894.0 422.0 L902.0 440.0 L908.0 455.0 L921.0 465.0 L935.0 473.0 L948.0 485.0 L953.0 492.0" fill="none" stroke="#55b36c" stroke-width="1" stroke-dasharray="3.2 1.8"/>
<path d="M953.0 492.0 L962.0 494.0" fill="none" stroke="#55b36c" stroke-width="1" stroke-dasharray="3.2 1.8"/>
<path d="M953.0 492.0 L953.9 500.0 L963.3 518.7 L968.5 551.9 L966.4 572.7 L971.6 597.6 L973.7 612.1 L984.0 634.9 L989.2 666.1 L1006.9 680.6 L1023.5 699.3 L1031.0 716.0 L1037.0 733.6 L1041.2 744.0 L1068.1 760.6 L1099.3 777.2 L1106.5 793.8 L1103.4 802.1 L1064.0 818.7 L1053.6 833.2 L1049.5 856.1 L1051.5 883.0" fill="none" stroke="#5bb974" stroke-width="1"/>
<path d="M1179.2 620.1 L1196.9 628.4 L1209.3 639.8 L1234.2 640.9 L1247.7 646.0" fill="none" stroke="#5bb974" stroke-width="1"/>
<path d="M1150.1 767.8 L1152.2 779.3 L1140.8 802.1" fill="none" stroke="#5bb974" stroke-width="1"/>
<path d="M1145.0 808.3 L1153.3 812.5 L1156.4 819.7" fill="none" stroke="#5bb974" stroke-width="1"/>
<path d="M1275.7 751.0 L1279.9 762.7 L1283.0 776.2" fill="none" stroke="#5bb974" stroke-width="1"/>
<text transform="translate(1031.6 486.5) rotate(-47.2)" text-anchor="middle" dy=".35em" font-size="10.6" fill="#6f757b" font-weight="normal" letter-spacing="0" stroke="#fff" stroke-width="2.4" stroke-linejoin="round" paint-order="stroke">Tjärhovsgatan</text>
<text transform="translate(1013.9 539.4) rotate(44.0)" text-anchor="middle" dy=".35em" font-size="10.6" fill="#6f757b" font-weight="normal" letter-spacing="0" stroke="#fff" stroke-width="2.4" stroke-linejoin="round" paint-order="stroke">Älvgatan</text>
<text transform="translate(1066.5 515.7) rotate(-43.9)" text-anchor="middle" dy=".35em" font-size="10.6" fill="#6f757b" font-weight="normal" letter-spacing="0" stroke="#fff" stroke-width="2.4" stroke-linejoin="round" paint-order="stroke">Vattugatan</text>
<text transform="translate(1094.8 474.2) rotate(42.9)" text-anchor="middle" dy=".35em" font-size="10.6" fill="#6f757b" font-weight="normal" letter-spacing="0" stroke="#fff" stroke-width="2.4" stroke-linejoin="round" paint-order="stroke">Fagerlinsvägen</text>
<text transform="translate(1113.2 572.0) rotate(-14.5)" text-anchor="middle" dy=".35em" font-size="10.6" fill="#6f757b" font-weight="normal" letter-spacing="0" stroke="#fff" stroke-width="2.4" stroke-linejoin="round" paint-order="stroke">Repslagargatan</text>
<text transform="translate(1166.4 578.0) rotate(76.4)" text-anchor="middle" dy=".35em" font-size="10.6" fill="#6f757b" font-weight="normal" letter-spacing="0" stroke="#fff" stroke-width="2.4" stroke-linejoin="round" paint-order="stroke">Residensgatan</text>
<text transform="translate(1223.0 549.5) rotate(75.0)" text-anchor="middle" dy=".35em" font-size="10.6" fill="#6f757b" font-weight="normal" letter-spacing="0" stroke="#fff" stroke-width="2.4" stroke-linejoin="round" paint-order="stroke">Trädgårdsgatan</text>
<text transform="translate(1286.3 557.8) rotate(72.8)" text-anchor="middle" dy=".35em" font-size="10.6" fill="#6f757b" font-weight="normal" letter-spacing="0" stroke="#fff" stroke-width="2.4" stroke-linejoin="round" paint-order="stroke">Tullgatan</text>
<text transform="translate(1277.5 510.0) rotate(42.0)" text-anchor="start" dy=".35em" font-size="10.6" fill="#6f757b" font-weight="normal" letter-spacing="0" stroke="#fff" stroke-width="2.4" stroke-linejoin="round" paint-order="stroke">Norra Strandgatan</text>
<text transform="translate(1324.0 696.4) rotate(74.0)" text-anchor="middle" dy=".35em" font-size="10.6" fill="#6f757b" font-weight="normal" letter-spacing="0" stroke="#fff" stroke-width="2.4" stroke-linejoin="round" paint-order="stroke">Tullgatan</text>
<text transform="translate(1320.4 629.5) rotate(-12.0)" text-anchor="start" dy=".35em" font-size="10.6" fill="#6f757b" font-weight="normal" letter-spacing="0" stroke="#fff" stroke-width="2.4" stroke-linejoin="round" paint-order="stroke">Storgatan</text>
<text transform="translate(1234.2 778.9) rotate(-12.2)" text-anchor="middle" dy=".35em" font-size="11.6" fill="#fff" letter-spacing="0.1" stroke="#fff" stroke-width="3" stroke-linejoin="round">Sandviksgatan</text>
<text transform="translate(1234.2 778.9) rotate(-12.2)" text-anchor="middle" dy=".35em" font-size="11.6" fill="#3a3d42" letter-spacing="0.1" stroke="#3a3d42" stroke-width=".45">Sandviksgatan</text>
<text transform="translate(933.2 859.2) rotate(-16.0)" text-anchor="middle" dy=".35em" font-size="11.6" fill="#fff" letter-spacing="0.1" stroke="#fff" stroke-width="3" stroke-linejoin="round">Älvbrovägen</text>
<text transform="translate(933.2 859.2) rotate(-16.0)" text-anchor="middle" dy=".35em" font-size="11.6" fill="#3a3d42" letter-spacing="0.1" stroke="#3a3d42" stroke-width=".45">Älvbrovägen</text>
<text transform="translate(1051.0 829.3) rotate(-15.0)" text-anchor="middle" dy=".35em" font-size="11.6" fill="#fff" letter-spacing="0.1" stroke="#fff" stroke-width="3" stroke-linejoin="round">Älvbrovägen</text>
<text transform="translate(1051.0 829.3) rotate(-15.0)" text-anchor="middle" dy=".35em" font-size="11.6" fill="#3a3d42" letter-spacing="0.1" stroke="#3a3d42" stroke-width=".45">Älvbrovägen</text>
<text transform="translate(1230.6 827.0) rotate(-14.2)" text-anchor="middle" dy=".35em" font-size="10.6" fill="#6f757b" font-weight="normal" letter-spacing="0" stroke="#fff" stroke-width="2.4" stroke-linejoin="round" paint-order="stroke">Västra Varvsgatan</text>
<text transform="translate(1163.6 849.9) rotate(72.4)" text-anchor="middle" dy=".35em" font-size="10.6" fill="#6f757b" font-weight="normal" letter-spacing="0" stroke="#fff" stroke-width="2.4" stroke-linejoin="round" paint-order="stroke">Oscarsgatan</text>
<text transform="translate(1229.5 836.0) rotate(70.4)" text-anchor="start" dy=".35em" font-size="10.6" fill="#6f757b" font-weight="normal" letter-spacing="0" stroke="#fff" stroke-width="2.4" stroke-linejoin="round" paint-order="stroke">Residensgatan</text>
<text x="863.2" y="410.6" text-anchor="start" font-size="14" fill="#1e8e3e" stroke="#fff" stroke-width="2.6" stroke-linejoin="round" paint-order="stroke" textLength="85.5" lengthAdjust="spacingAndGlyphs">Gültzauudden</text>
<text x="1151.3" y="478.0" text-anchor="start" font-size="14" fill="#1e8e3e" stroke="#fff" stroke-width="2.6" stroke-linejoin="round" paint-order="stroke" textLength="73" lengthAdjust="spacingAndGlyphs">Fågeldamm</text>
<text x="1238.5" y="433.0" text-anchor="start" font-size="14" fill="#12858f" stroke="#fff" stroke-width="2.6" stroke-linejoin="round" paint-order="stroke" textLength="113" lengthAdjust="spacingAndGlyphs">Bastustugan Luleå</text>
<text x="994.4" y="639.5" text-anchor="start" font-size="14" fill="#5b7083" stroke="#fff" stroke-width="2.6" stroke-linejoin="round" paint-order="stroke" textLength="77" lengthAdjust="spacingAndGlyphs">Kungsfågeln</text>
<text x="1109.7" y="653.0" text-anchor="start" font-size="14" fill="#6d757c" stroke="#fff" stroke-width="2.6" stroke-linejoin="round" paint-order="stroke" textLength="131.8" lengthAdjust="spacingAndGlyphs">Norrbottens museum</text>
<text x="1166.7" y="664.8" text-anchor="start" font-size="11" fill="#70757a" stroke="#fff" stroke-width="2.6" stroke-linejoin="round" paint-order="stroke" textLength="75.8" lengthAdjust="spacingAndGlyphs">Tillfälligt stängt</text>
<text x="1036.0" y="704.6" text-anchor="start" font-size="14" fill="#5b7083" stroke="#fff" stroke-width="2.6" stroke-linejoin="round" paint-order="stroke" textLength="92.3" lengthAdjust="spacingAndGlyphs">Länsstyrelsen i</text>
<text x="1035.0" y="718.7" text-anchor="start" font-size="14" fill="#5b7083" stroke="#fff" stroke-width="2.6" stroke-linejoin="round" paint-order="stroke" textLength="93.3" lengthAdjust="spacingAndGlyphs">Norrbottens län</text>
<path d="M954.50 408.70 A10.4 10.4 0 1 1 970.90 408.70 Q965.90 415.55 962.70 420.70 Q959.50 415.55 954.50 408.70 Z" fill="#34a853" stroke="#fff" stroke-width=".5"/>
<path d="M962.7 396.7 l3 4 h-1.600000000000001 l2.800000000000001 4 h-3.400000000000001 v2 h-1.600000000000001 v-2 h-3.400000000000001 l2.800000000000001 -4 h-1.600000000000001z" fill="#fff"/>
<path d="M1129.80 476.10 A10.4 10.4 0 1 1 1146.20 476.10 Q1141.20 482.95 1138.00 488.10 Q1134.80 482.95 1129.80 476.10 Z" fill="#34a853" stroke="#fff" stroke-width=".5"/>
<path d="M1138.0 464.1 l3 4 h-1.600000000000001 l2.800000000000001 4 h-3.400000000000001 v2 h-1.600000000000001 v-2 h-3.400000000000001 l2.800000000000001 -4 h-1.600000000000001z" fill="#fff"/>
<g transform="translate(0 -1.2)">
<path d="M1076.50 637.20 A10.4 10.4 0 1 1 1092.90 637.20 Q1087.90 644.05 1084.70 649.20 Q1081.50 644.05 1076.50 637.20 Z" fill="#78909c" stroke="#fff" stroke-width=".5"/>
<path d="M1084.7 626.2 l6 2.6 l-6 2.6 l-6 -2.6z M1080.9 631.2 v2.4 q3.800000000000001 2.2 7.600000000000001 0 v-2.4 l-3.8 1.6z" fill="#fff"/>
</g>
<g transform="translate(0 -1.7)">
<path d="M1210.40 685.70 A10.4 10.4 0 1 1 1226.80 685.70 Q1221.80 692.55 1218.60 697.70 Q1215.40 692.55 1210.40 685.70 Z" fill="#9aa0a6" stroke="#fff" stroke-width=".5"/>
<path d="M1218.6 673.6 l5.6 3 v1 h-11.2 v-1z M1214 678.4 h9.2 v5.6 h-9.2z" fill="#fff"/><path d="M1216.3 683 v-3.600000000000001 l2.3 2.2 l2.3 -2.2 v3.6" fill="none" stroke="#9aa0a6" stroke-width="1"/>
</g>
<path d="M1133.20 708.80 A10.4 10.4 0 1 1 1149.60 708.80 Q1144.60 715.65 1141.40 720.80 Q1138.20 715.65 1133.20 708.80 Z" fill="#78909c" stroke="#fff" stroke-width=".5"/>
<path d="M1141.4 696.6 l5.6 3 v1 h-11.2 v-1z M1136.6 701.4 h1.8 v3.6 h-1.8z M1140.5 701.4 h1.8 v3.6 h-1.8z M1144.4 701.4 h1.8 v3.6 h-1.8z M1135.8 705.8 h11.2 v1.4 h-11.2z" fill="#fff"/>
<circle cx="1033.9" cy="597.6" r="14.6" fill="#fff"/><circle cx="1033.9" cy="597.6" r="13.5" fill="#2e9a30"/>
<text x="1034.5" y="605.4" text-anchor="middle" font-size="21.6" font-weight="bold" fill="#fff">P</text>
<defs><filter id="csh" x="-20%" y="-20%" width="140%" height="150%"><feDropShadow dx="0" dy="1" stdDeviation="1.6" flood-color="#000" flood-opacity=".3"/></filter></defs>
<g filter="url(#csh)"><rect x="747" y="323" width="166" height="40" rx="2" fill="#fff"/></g>
<path d="M824.2 323 v40" stroke="#e6e6e6" stroke-width="1"/>
<text x="764.4" y="348.8" font-size="18" fill="#000" stroke="#000" stroke-width=".2" textLength="42.6" lengthAdjust="spacingAndGlyphs">Karta</text>
<text x="841.8" y="348.8" font-size="18" fill="#565656" textLength="54" lengthAdjust="spacingAndGlyphs">Satellit</text>
<g filter="url(#csh)"><rect x="1000.9" y="318.2" width="23.8" height="26.5" rx="2" fill="#fff"/><rect x="1048.6" y="318.2" width="23.4" height="23.6" rx="2" fill="#fff"/><rect x="1024.5" y="318.2" width="24.3" height="26.5" rx="2" fill="#fff"/></g>
<path d="M1024.6 319.5 v24" stroke="#ececec" stroke-width="1"/>
<path d="M1011.6 337.2 L1006.3 331.2 q-.5 -1.1 .6 -1.5 q1 -.2 1.8 .8 l.9 1 L1007.6 327 q-.4 -1.300000000000001 .7 -1.6 q1 -.2 1.4 .9 L1009.4 324.8 q.2 -1.1 1.300000000000001 -1 q1 .1 1.1 1.2 q.2 -1.6 1.400000000000001 -1.6 q1.2 0 1.400000000000001 1.500000000000001 q.3 -1 1.3 -.8 q1 .2 1 1.3 q.5 -.6 1.3 -.3 q.9 .4 .9 1.500000000000001 L1019.9 330.2 q-.1 1.6 -1.1 3.2 L1016.6 337.2" fill="#fff" stroke="#111" stroke-width="1.1" stroke-linejoin="round" stroke-linecap="round" stroke-dasharray="2.2 .5"/>
<path d="M1010.7 325.6 v3.2 M1012.9 324.6 v4 M1015.6 325 v3.800000000000001 M1018 326.6 v3.000000000000001" stroke="#111" stroke-width="1" stroke-linecap="round"/>
<path d="M1030.3 324.2 l5.9 5.3 l7.3 -3.3 l-1.5 5.6 l-8.5 3.8z" fill="#bdbdbd" stroke="#8c8c8c" stroke-width="1.2" stroke-linejoin="round"/>
<path d="M1053.4 324.2 l5.9 5.3 l7.3 -3.3 l-1.5 5.6 l-8.5 3.8z" fill="#bdbdbd" stroke="#8c8c8c" stroke-width="1.2" stroke-linejoin="round"/>
<path d="M1056.9 323.8 l8.1 6.800000000000001 M1065.3 323.8 l-8 6.800000000000001" stroke="#555" stroke-width="1.9"/>
<g filter="url(#csh)"><rect x="1281" y="706.2" width="40" height="39.6" rx="2" fill="#fff"/><rect x="1281" y="778.2" width="40" height="80.4" rx="2" fill="#fff"/></g>
<path d="M1295 721.2 L1305.9 721.2 q1 0 1.400000000000001 1 L1308.9 731.4 q.2 1 -.8 1.200000000000001 l-1.400000000000001 .2 q-.6 0 -.8 -.6 L1304.8 727.6 V740.7 h-3.9 v-7.600000000000001 h-1 v7.600000000000001 h-3.9 V727.6 L1294.9 732.2 q-.2 .6 -.8 .6 l-1.400000000000001 -.2 q-1 -.2 -.8 -1.200000000000001 L1293.6 722.2 q.4 -1 1.400000000000001 -1z" fill="#fbc02d" stroke="#9c7a1c" stroke-width=".55" stroke-linejoin="round"/>
<path d="M1297 721.2 h6.4 l-3.2 5.800000000000001z" fill="#e8833a"/>
<circle cx="1300.3" cy="716" r="4.9" fill="#fbc02d" stroke="#9c7a1c" stroke-width=".55"/>
<path d="M1287 818.7 h28" stroke="#e6e6e6" stroke-width="1"/>
<path d="M1291.6 798 h18 M1300.6 789 v18 M1291.6 838.8 h18" stroke="#666" stroke-width="3"/>
<text x="746.6" y="874.8" font-size="20.8" letter-spacing="-.9" stroke="#fff" stroke-width="2.4" stroke-linejoin="round" paint-order="stroke" textLength="57.5" lengthAdjust="spacingAndGlyphs"><tspan fill="#4285f4">G</tspan><tspan fill="#ea4335">o</tspan><tspan fill="#fbbc05">o</tspan><tspan fill="#4285f4">g</tspan><tspan fill="#34a853">l</tspan><tspan fill="#ea4335">e</tspan></text>
<rect x="884.4" y="869" width="85.2" height="14" fill="#fff" opacity=".7"/><rect x="971.2" y="869" width="360" height="14" fill="#fff" opacity=".7"/>
<text x="889.4" y="878.6" font-size="10" fill="#222" textLength="74.5" lengthAdjust="spacingAndGlyphs">Kortkommandon</text>
<text x="976.0" y="878.6" font-size="10" fill="#222" textLength="104.6" lengthAdjust="spacingAndGlyphs">Kartdata ©2024 Google</text>
<text x="1093.5" y="878.6" font-size="10" fill="#222" textLength="26.5" lengthAdjust="spacingAndGlyphs">100 m</text>
<path d="M1125.9 872.7 v5.2 h51.6 v-5.2" fill="none" stroke="#333" stroke-width="1.6"/>
<text x="1191.0" y="878.6" font-size="10" fill="#222" textLength="27.0" lengthAdjust="spacingAndGlyphs">Villkor</text>
<text x="1230.5" y="878.6" font-size="10" fill="#222" textLength="94.0" lengthAdjust="spacingAndGlyphs">Rapportera ett kartfel</text>
</svg><!--/MAP--></div>
 </div></div>
</div>
</body>
</html>
